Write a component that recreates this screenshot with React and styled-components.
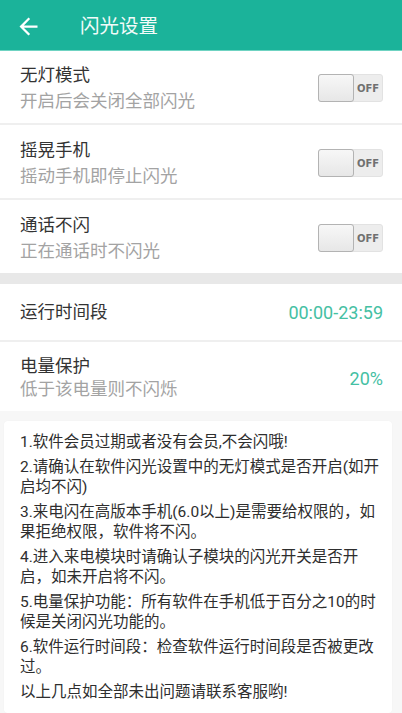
import React, { useState } from 'react';
import styled, { createGlobalStyle } from 'styled-components';

const GlobalStyle = createGlobalStyle`
  html, body {
    margin: 0;
    padding: 0;
    background: #f7f7f7;
  }
  body {
    font-family: Roboto, "Noto Sans CJK SC", sans-serif;
  }
`;

const Page = styled.div`
  width: 402px;
  min-height: 713px;
  display: flex;
  flex-direction: column;
  background: #f7f7f7;
`;

const Header = styled.header`
  height: 50px;
  background: #1bb39a;
  display: flex;
  align-items: center;
  padding-left: 15px;
  box-shadow: 0 1px 0 #6fd3c2;
  position: relative;
  z-index: 1;
`;

const BackButton = styled.button`
  background: none;
  border: none;
  padding: 0;
  width: 27px;
  height: 27px;
  display: flex;
  margin-top: 3px;
  cursor: pointer;
`;

const Title = styled.h1`
  margin: 0 0 0 38px;
  font-size: 19.5px;
  font-weight: 400;
  color: #f2fbf9;
  line-height: 50px;
  padding-top: 4px;
`;

const Group = styled.section`
  background: #fff;
`;

const Row = styled.div`
  display: flex;
  align-items: center;
  justify-content: space-between;
  padding: ${p => p.$pad || '12px 20px 9px 20px'};
  border-top: ${p => (p.$first ? 'none' : '2px solid #efefef')};
`;

const TextCol = styled.div`
  display: flex;
  flex-direction: column;
`;

const RowTitle = styled.div`
  font-size: 17.5px;
  color: #333;
  line-height: ${p => p.$lh || '26px'};
`;

const RowSub = styled.div`
  font-size: 17.5px;
  color: #a3a3a3;
  line-height: ${p => p.$lh || '26px'};
`;

const Value = styled.div`
  font-size: 18px;
  color: #45c0a3;
  margin-right: -1px;
  padding-top: ${p => p.$top || '0'};
`;

const Switch = styled.button`
  width: 65px;
  height: 28px;
  padding: 0;
  border: 1px solid #e2e2e2;
  border-radius: 3px;
  background: #ededed;
  display: flex;
  align-items: stretch;
  cursor: pointer;
  margin-right: -1px;
`;

const Thumb = styled.span`
  width: 34px;
  margin: -1px 0 -1px -1px;
  border: 1.5px solid #b3b3b3;
  border-radius: 3px;
  background: linear-gradient(#f7f7f7, #e7e7e7);
`;

const SwitchLabel = styled.span`
  flex: 1;
  display: flex;
  align-items: center;
  justify-content: center;
  font-family: "DejaVu Sans", sans-serif;
  font-size: 10px;
  font-weight: 700;
  color: #707070;
`;

const Band = styled.div`
  height: 11px;
  background: #e8e8e8;
`;

const Footer = styled.div`
  flex: 1;
  padding: 10px 10px 11px 4px;
  background: #f7f7f7;
`;

const Card = styled.div`
  background: #fff;
  border-radius: 4px;
  padding: 11px 8px 6px 16px;
  box-shadow: 0 0 2px rgba(0, 0, 0, 0.03);
`;

const Para = styled.p`
  margin: 0 0 5px 0;
  font-size: 15.5px;
  line-height: 20px;
  color: #2e2e2e;
`;

const ArrowIcon = () => (
  <svg width="27" height="27" viewBox="0 0 24 24">
    <path
      fill="#ffffff"
      d="M20 11H7.83l5.59-5.59L12 4l-8 8 8 8 1.41-1.41L7.83 13H20v-2z"
    />
  </svg>
);

function Toggle({ on, onChange }) {
  return (
    <Switch onClick={onChange} aria-pressed={on}>
      <Thumb />
      <SwitchLabel>{on ? 'ON' : 'OFF'}</SwitchLabel>
    </Switch>
  );
}

const toggles = [
  { key: 'noLight', title: '无灯模式', sub: '开启后会关闭全部闪光' },
  { key: 'shake', title: '摇晃手机', sub: '摇动手机即停止闪光' },
  { key: 'call', title: '通话不闪', sub: '正在通话时不闪光' },
];

const tips = [
  '1.软件会员过期或者没有会员,不会闪哦!',
  '2.请确认在软件闪光设置中的无灯模式是否开启(如开启均不闪)',
  '3.来电闪在高版本手机(6.0以上)是需要给权限的，如果拒绝权限，软件将不闪。',
  '4.进入来电模块时请确认子模块的闪光开关是否开启，如未开启将不闪。',
  '5.电量保护功能：所有软件在手机低于百分之10的时候是关闭闪光功能的。',
  '6.软件运行时间段：检查软件运行时间段是否被更改过。',
  '以上几点如全部未出问题请联系客服哟!',
];

export default function App() {
  const [state, setState] = useState({ noLight: false, shake: false, call: false });

  return (
    <Page>
      <GlobalStyle />
      <Header>
        <BackButton aria-label="返回">
          <ArrowIcon />
        </BackButton>
        <Title>闪光设置</Title>
      </Header>

      <Group>
        {toggles.map((t, i) => (
          <Row key={t.key} $first={i === 0}>
            <TextCol>
              <RowTitle>{t.title}</RowTitle>
              <RowSub>{t.sub}</RowSub>
            </TextCol>
            <Toggle
              on={state[t.key]}
              onChange={() => setState({ ...state, [t.key]: !state[t.key] })}
            />
          </Row>
        ))}
      </Group>

      <Band />

      <Group>
        <Row $first $pad="15px 20px 15px 20px">
          <RowTitle>运行时间段</RowTitle>
          <Value>00:00-23:59</Value>
        </Row>
        <Row $pad="12px 20px 11px 20px">
          <TextCol>
            <RowTitle $lh="24px">电量保护</RowTitle>
            <RowSub $lh="22px">低于该电量则不闪烁</RowSub>
          </TextCol>
          <Value $top="2px">20%</Value>
        </Row>
      </Group>

      <Footer>
        <Card>
          {tips.map((t, i) => (
            <Para key={i}>{t}</Para>
          ))}
        </Card>
      </Footer>
    </Page>
  );
}
